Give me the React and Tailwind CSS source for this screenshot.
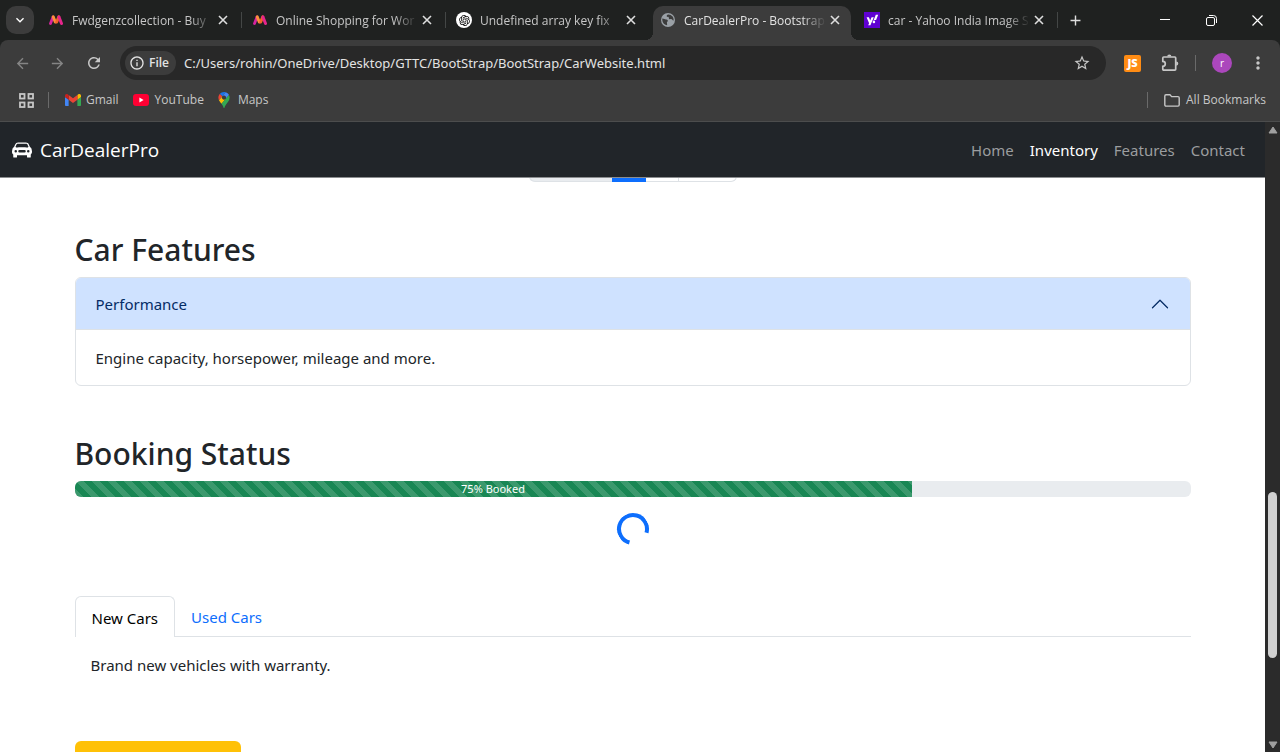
import { useState } from "react";
import { BsCarFrontFill } from "react-icons/bs";
import { RiOpenaiFill } from "react-icons/ri";
import {
  MdArrowBack,
  MdArrowForward,
  MdRefresh,
  MdInfoOutline,
  MdStarOutline,
  MdMoreVert,
  MdAdd,
  MdKeyboardArrowDown,
} from "react-icons/md";

function MyntraIcon() {
  return (
    <svg viewBox="0 0 14 12" className="h-3 w-[14px]" fill="none" strokeLinecap="round" aria-hidden="true">
      <path d="M1.500 9.500 4 3" stroke="#d6249f" strokeWidth="2.800" />
      <path d="M4.200 2.800 6.300 8" stroke="#fd913c" strokeWidth="3" />
      <path d="M9.800 2.800 7.700 8" stroke="#f4622a" strokeWidth="3" />
      <path d="M12.500 9.500 10 3" stroke="#e6258c" strokeWidth="3" />
    </svg>
  );
}

function OpenAiIcon() {
  return (
    <span className="flex size-4 items-center justify-center rounded-full bg-white text-black">
      <RiOpenaiFill size={13} />
    </span>
  );
}

function GlobeIcon() {
  return (
    <svg viewBox="0 0 14 14" className="size-[14px]" aria-hidden="true">
      <circle cx="7" cy="7" r="7" fill="#9aa0a6" />
      <path
        d="M1.300 5.600c1.800.2 2.600.9 3.600 1 .9.100 1.800.3 1.900 1.100.1.900-.9 1-.9 1.900 0 .9.400 1.400.2 2.600C3.200 11.900 1 9.500 1.300 5.600zM7.400 1.400c-1.500.3-1.900 1.300-1.600 2 .3.800 1.600.2 2 1 .4.700-.2 1.300.5 1.700.9.500 1.400-.3 2.300.1.900.3 1 1.300 2 1.400.4-3.500-1.900-6-5.200-6.200z"
        fill="#3c3c3c"
      />
    </svg>
  );
}

function YahooIcon() {
  return (
    <svg viewBox="0 0 16 16" className="size-4" aria-hidden="true">
      <rect width="16" height="16" fill="#5f01d1" />
      <path d="M2.6 5.2h2.3l1.3 3.3 1.4-3.3h2.2l-3.4 8.1H4.2l.9-2.1z" fill="#fff" />
      <path d="M11.8 2.8h2.4l-2.1 5.1H9.7z" fill="#fff" />
      <circle cx="9.9" cy="9.9" r="1.3" fill="#fff" />
    </svg>
  );
}

function GmailIcon() {
  return (
    <svg viewBox="52 42 88 66" className="h-3 w-4" aria-hidden="true">
      <path fill="#4285f4" d="M58 108h14V74L52 59v43c0 3.32 2.69 6 6 6" />
      <path fill="#34a853" d="M120 108h14c3.32 0 6-2.69 6-6V59l-20 15" />
      <path fill="#fbbc04" d="M120 48v26l20-15v-8c0-7.42-8.47-11.65-14.4-7.2" />
      <path fill="#ea4335" d="M72 74V48l24 18 24-18v26L96 92" />
      <path fill="#c5221f" d="M52 51v8l20 15V48l-5.6-4.2c-5.94-4.45-14.4-.22-14.4 7.2" />
    </svg>
  );
}

function YouTubeIcon() {
  return (
    <svg viewBox="0 0 16 12" className="h-3 w-4" aria-hidden="true">
      <rect width="16" height="12" rx="3" fill="#ff0033" />
      <path d="M6.4 3.5v5l4.2-2.5z" fill="#fff" />
    </svg>
  );
}

function MapsIcon() {
  return (
    <svg viewBox="0 0 92.3 132.3" className="h-4 w-3" aria-hidden="true">
      <path fill="#1a73e8" d="M60.2 2.2C55.8.8 51 0 46.1 0 32 0 19.3 6.4 10.8 16.5l21.8 18.3z" />
      <path fill="#ea4335" d="M10.8 16.5C4.1 24.5 0 34.9 0 46.1c0 8.7 1.7 15.7 4.6 22l28-33.3z" />
      <path fill="#4285f4" d="M46.2 28.5c9.8 0 17.7 7.9 17.7 17.7 0 4.3-1.6 8.3-4.2 11.4 0 0 13.9-16.6 27.5-32.7-5.6-10.8-15.3-19-27-22.7L32.6 34.8c3.3-3.8 8.1-6.3 13.6-6.3" />
      <path fill="#fbbc04" d="M46.2 63.8c-9.8 0-17.7-7.9-17.7-17.7 0-4.3 1.5-8.3 4.1-11.3l-28 33.3c4.8 10.6 12.8 19.2 21 29.9l34.1-40.5c-3.3 3.9-8.1 6.3-13.5 6.3" />
      <path fill="#34a853" d="M59.1 109.2c15.4-24.1 33.3-35 33.3-63 0-7.7-1.9-14.9-5.2-21.3L25.6 98c2.6 3.4 5.3 7.3 7.9 11.3 9.4 14.5 6.8 23.1 12.8 23.1s3.4-8.7 12.8-23.2" />
    </svg>
  );
}

function PuzzleIcon() {
  return (
    <svg viewBox="0 0 18 18" className="size-[18px]" fill="none" aria-hidden="true">
      <path
        d="M2.700 3h11.100c.5 0 .9.400.9.900v11.400c0 .5-.4.900-.9.900H2.700c-.5 0-.9-.4-.9-.9v-3c1.500 0 2.500-1 2.500-2.500S3.300 7.300 1.800 7.300V3.900c0-.5.400-.9.900-.9z"
        stroke="#c7c7c7"
        strokeWidth="1.700"
      />
      <path d="M6.200 2.500a2.100 2.100 0 0 1 4.200 0zM15.200 7.500a2.100 2.100 0 0 1 0 4.200z" fill="#c7c7c7" />
    </svg>
  );
}

function FolderIcon() {
  return (
    <svg viewBox="0 0 16 13" className="h-[13px] w-4" fill="none" stroke="#c7c7c7" strokeWidth="1.4" strokeLinejoin="round" aria-hidden="true">
      <path d="M.8 10.8V2.2C.8 1.4 1.3.8 2 .8h4l1.6 1.8H14c.7 0 1.2.5 1.2 1.2v7c0 .7-.5 1.3-1.2 1.3H2c-.7 0-1.2-.6-1.2-1.3z" />
    </svg>
  );
}

function AppsIcon() {
  return (
    <svg viewBox="0 0 15 15" className="size-[15px]" fill="none" stroke="#c7c7c7" strokeWidth="1.8" aria-hidden="true">
      <rect x="1" y="1" width="4.500" height="4.500" />
      <rect x="9.500" y="1" width="4.500" height="4.500" />
      <rect x="1" y="9.500" width="4.500" height="4.500" />
      <rect x="9.500" y="9.500" width="4.500" height="4.500" />
    </svg>
  );
}

const browserTabs = [
  { title: "Fwdgenzcollection - Buy", Icon: MyntraIcon },
  { title: "Online Shopping for Wor", Icon: MyntraIcon },
  { title: "Undefined array key fix", Icon: OpenAiIcon },
  { title: "CarDealerPro - Bootstrap", Icon: GlobeIcon, active: true },
  { title: "car - Yahoo India Image S", Icon: YahooIcon },
];

function BrowserTab({ title, Icon, active, divider }) {
  return (
    <div className="relative w-[204px] px-[3px]">
      <div
        className={
          active
            ? "relative flex h-full items-center rounded-t-[10px] bg-[#3c3c3c] pr-[11px] pb-[6px] pl-[7px] text-[#e3e3e3]"
            : "flex h-full items-center pr-[11px] pb-[6px] pl-[7px] text-[#c7c7c7]"
        }
      >
        {active && (
          <>
            <span className="absolute bottom-0 -left-2 size-2 bg-[radial-gradient(circle_at_0_0,transparent_8px,#3c3c3c_8px)]" />
            <span className="absolute -right-2 bottom-0 size-2 bg-[radial-gradient(circle_at_100%_0,transparent_8px,#3c3c3c_8px)]" />
          </>
        )}
        <span className="flex w-4 shrink-0 justify-center">
          <Icon />
        </span>
        <span className="ml-2 w-[142px] pt-px text-xs leading-[18px] whitespace-nowrap [mask-image:linear-gradient(to_right,black_118px,transparent_142px)]">
          {title}
        </span>
        <button type="button" aria-label="Close tab" className="ml-auto text-[#dedede]">
          <svg viewBox="0 0 10 10" className="size-[10px]" fill="none" stroke="currentColor" strokeWidth="1.600" aria-hidden="true">
            <path d="M1 1l8 8M9 1L1 9" />
          </svg>
        </button>
      </div>
      {divider && <span className="absolute top-[6px] right-0 h-4 w-px bg-[#444746]" />}
    </div>
  );
}

function TabStrip() {
  return (
    <div className="flex h-10 shrink-0 bg-[#1f2120] pt-[6px]">
      <button type="button" aria-label="Search tabs" className="ml-[6px] flex size-7 items-center justify-center rounded-[10px] bg-[#3c3c3c] text-white">
        <MdKeyboardArrowDown size={16} />
      </button>
      <div className="ml-1 flex">
        {browserTabs.map((tab, i) => (
          <BrowserTab key={i} {...tab} divider={i !== 2 && i !== 3} />
        ))}
      </div>
      <button type="button" aria-label="New tab" className="ml-[9px] flex h-7 items-center text-[#dedede]">
        <MdAdd size={17} />
      </button>
      <div className="ml-auto flex h-7 items-center text-white">
        <button type="button" aria-label="Minimize" className="flex w-[46px] justify-center">
          <svg viewBox="0 0 10 10" className="size-[10px]" stroke="currentColor" fill="none"><path d="M0 4.500h10" /></svg>
        </button>
        <button type="button" aria-label="Restore" className="flex w-[46px] justify-center">
          <svg viewBox="0 0 11 11" className="size-[11px]" stroke="currentColor" fill="none">
            <rect x=".5" y="2.5" width="8" height="8" rx="1.5" />
            <path d="M3 .5h4.500a3 3 0 0 1 3 3V8" />
          </svg>
        </button>
        <button type="button" aria-label="Close window" className="flex w-[46px] justify-center">
          <svg viewBox="0 0 11 11" className="size-[11px]" stroke="currentColor" strokeWidth="1.200" fill="none"><path d="M.5.5l10 10M10.500.5l-10 10" /></svg>
        </button>
      </div>
    </div>
  );
}

function Toolbar() {
  return (
    <div className="flex h-[46px] shrink-0 items-center rounded-t-lg bg-[#3c3c3c] text-[#c7c7c7]">
      <button type="button" aria-label="Back" className="ml-[14px] text-[#858585]"><MdArrowBack size={17} /></button>
      <button type="button" aria-label="Forward" className="ml-[18px] text-[#858585]"><MdArrowForward size={17} /></button>
      <button type="button" aria-label="Reload" className="ml-[19px]"><MdRefresh size={18} /></button>
      <div className="ml-[17px] flex h-[34px] flex-1 items-center rounded-full bg-[#282828] pr-[15px] pl-[5px]">
        <button type="button" className="flex h-6 w-[51px] items-center gap-1 rounded-full bg-[#3c3c3c] pl-1 text-xs font-semibold text-[#e3e3e3]">
          <MdInfoOutline size={16} className="shrink-0" />
          File
        </button>
        <input
          type="text"
          aria-label="Address"
          defaultValue="C:/Users/rohin/OneDrive/Desktop/GTTC/BootStrap/BootStrap/CarWebsite.html"
          className="ml-2 min-w-0 flex-1 bg-transparent pt-px font-['Noto_Sans',sans-serif] text-[13px] text-[#e3e3e3] outline-none"
        />
        <button type="button" aria-label="Bookmark this page"><MdStarOutline size={18} /></button>
      </div>
      <button type="button" aria-label="JavaScript extension" className="ml-[18px] flex size-[17px] items-center justify-center rounded-[2px] bg-[#ff8c14] text-[11px] font-extrabold text-white">
        JS
      </button>
      <button type="button" aria-label="Extensions" className="ml-5"><PuzzleIcon /></button>
      <span className="ml-4 h-4 w-px bg-[#6a6a6a]" />
      <button type="button" aria-label="Profile" className="ml-4 flex size-5 items-center justify-center rounded-full bg-[#ab47bc] text-[10px] text-white">r</button>
      <button type="button" aria-label="Menu" className="mr-3 ml-4"><MdMoreVert size={20} /></button>
    </div>
  );
}

function BookmarksBar() {
  return (
    <div className="flex h-9 shrink-0 items-center border-b border-[#4c4d4d] bg-[#3c3c3c] pb-[7px] text-xs text-[#c7c7c7]">
      <button type="button" aria-label="Apps" className="ml-[19px]"><AppsIcon /></button>
      <span className="ml-[14px] h-4 w-px bg-[#6a6a6a]" />
      <a href="#gmail" className="ml-4 flex items-center gap-[5px]"><GmailIcon />Gmail</a>
      <a href="#youtube" className="ml-[14px] flex items-center gap-[6px]"><YouTubeIcon />YouTube</a>
      <a href="#maps" className="ml-[14px] flex items-center gap-2"><MapsIcon />Maps</a>
      <span className="ml-auto h-4 w-px bg-[#6a6a6a]" />
      <button type="button" className="mr-[14px] ml-4 flex items-center gap-[6px]"><FolderIcon />All Bookmarks</button>
    </div>
  );
}

function SiteNav() {
  const links = ["Home", "Inventory", "Features", "Contact"];
  return (
    <nav className="flex h-14 shrink-0 items-center justify-between border-b border-[#8b8d8f] bg-[#212529] pt-px pr-5 pl-3">
      <a href="#top" className="flex items-center gap-2 font-['Open_Sans',sans-serif] text-[19px] text-white">
        <BsCarFrontFill size={20} />
        CarDealerPro
      </a>
      <ul className="flex gap-4 text-[15px]">
        {links.map((link) => (
          <li key={link}>
            <a href={"#" + link.toLowerCase()} className={link === "Inventory" ? "text-white" : "text-[#9b9d9f]"}>
              {link}
            </a>
          </li>
        ))}
      </ul>
    </nav>
  );
}

function Pagination() {
  return (
    <ul className="-mt-[34px] flex justify-center">
      <li><a href="#prev" aria-label="Previous page" className="block h-[38px] w-[83px] rounded-l-md border border-r-0 border-[#dee2e6] bg-[#e9ecef]" /></li>
      <li><a href="#p1" aria-label="Page 1" className="block h-[38px] w-[34px] bg-[#0d6efd]" /></li>
      <li><a href="#p2" aria-label="Page 2" className="block h-[38px] w-[33px] border border-l-0 border-[#dee2e6]" /></li>
      <li><a href="#next" aria-label="Next page" className="block h-[38px] w-[58px] rounded-r-md border border-l-0 border-[#dee2e6]" /></li>
    </ul>
  );
}

function SectionTitle({ children }) {
  return <h2 className="text-[30px] leading-[38px] font-medium">{children}</h2>;
}

function Features() {
  const [open, setOpen] = useState(true);
  return (
    <section className="mt-[49px]">
      <SectionTitle>Car Features</SectionTitle>
      <div className="mt-2 overflow-hidden rounded-md border border-[#dee2e6]">
        <button
          type="button"
          aria-expanded={open}
          onClick={() => setOpen(!open)}
          className="-mx-px -mt-px flex h-[53px] w-[calc(100%+2px)] items-center justify-between border-b border-[#dee2e6] bg-[#cfe2ff] px-[21px] pt-[2px] text-[#052c65]"
        >
          Performance
          <svg viewBox="0 0 16 16" className={open ? "size-5" : "size-5 rotate-180"} fill="none" stroke="#052c65" strokeLinecap="round" strokeLinejoin="round" aria-hidden="true">
            <path d="M2 11l6-6 6 6" />
          </svg>
        </button>
        {open && <div className="px-5 pt-4 pb-[15px] leading-6">Engine capacity, horsepower, mileage and more.</div>}
      </div>
    </section>
  );
}

function BookingStatus() {
  return (
    <section className="mt-[49px]">
      <SectionTitle>Booking Status</SectionTitle>
      <div className="mt-2 h-4 overflow-hidden rounded-md bg-[#e9ecef]" role="progressbar" aria-label="Booked" aria-valuenow={75} aria-valuemin={0} aria-valuemax={100}>
        <div className="flex h-full w-3/4 items-center justify-center bg-[#198754] bg-[linear-gradient(45deg,rgba(255,255,255,.15)_25%,transparent_25%,transparent_50%,rgba(255,255,255,.15)_50%,rgba(255,255,255,.15)_75%,transparent_75%,transparent)] bg-[length:16px_16px] text-[11px] leading-4 text-white">
          75% Booked
        </div>
      </div>
      <div className="mt-4 flex justify-center">
        <div role="status" aria-label="Loading" className="size-8 rotate-[60deg] rounded-full border-4 border-[#0d6efd] border-r-transparent" />
      </div>
    </section>
  );
}

function CarTabs() {
  const [tab, setTab] = useState("new");
  const on = "-mb-px h-[41px] rounded-t-md border border-b-0 border-[#dee2e6] bg-white px-4 pt-[2px] text-black";
  const off = "h-10 px-4 pt-[3px] text-[#0d6efd]";
  return (
    <section className="mt-[51px]">
      <div role="tablist" className="flex border-b border-[#dee2e6]">
        <button type="button" role="tab" aria-selected={tab === "new"} onClick={() => setTab("new")} className={tab === "new" ? on : off}>
          New Cars
        </button>
        <button type="button" role="tab" aria-selected={tab === "used"} onClick={() => setTab("used")} className={tab === "used" ? on : off}>
          Used Cars
        </button>
      </div>
      <div role="tabpanel" className="p-4 leading-6">
        {tab === "new" ? "Brand new vehicles with warranty." : "Certified used vehicles."}
      </div>
    </section>
  );
}

function Scrollbar() {
  return (
    <div className="flex w-[15px] shrink-0 flex-col items-center justify-between bg-[#2b2b2b] pt-1 pb-[3px]" aria-hidden="true">
      <svg viewBox="0 0 10 8" className="h-2 w-[10px]"><path d="M5 1l4 6H1z" fill="#a0a0a0" stroke="#a0a0a0" strokeLinejoin="round" /></svg>
      <div className="flex w-full flex-1 flex-col items-center">
        <span className="grow-[359]" />
        <span className="w-[9px] grow-[166] rounded-full bg-[#d0d0d0]" />
        <span className="grow-[83]" />
      </div>
      <svg viewBox="0 0 10 8" className="h-2 w-[10px]"><path d="M5 7l4-6H1z" fill="#a0a0a0" stroke="#a0a0a0" strokeLinejoin="round" /></svg>
    </div>
  );
}

export default function App() {
  return (
    <div className="flex h-screen flex-col overflow-hidden bg-[#1f2120] font-['Noto_Sans',sans-serif]">
      <header className="shrink-0 font-['Open_Sans',sans-serif]">
        <TabStrip />
        <Toolbar />
        <BookmarksBar />
      </header>
      <div className="flex min-h-0 flex-1 bg-white">
        <div className="flex min-w-0 flex-1 flex-col">
          <SiteNav />
          <main className="min-h-0 flex-1 overflow-hidden text-[15px] text-[#212529]">
            <div className="mx-auto max-w-[1140px] px-3">
              <Pagination />
              <Features />
              <BookingStatus />
              <CarTabs />
              <button type="button" aria-label="Open booking form" className="mt-12 block h-[38px] w-[166px] rounded-md bg-[#ffc107]" />
            </div>
          </main>
        </div>
        <Scrollbar />
      </div>
    </div>
  );
}
